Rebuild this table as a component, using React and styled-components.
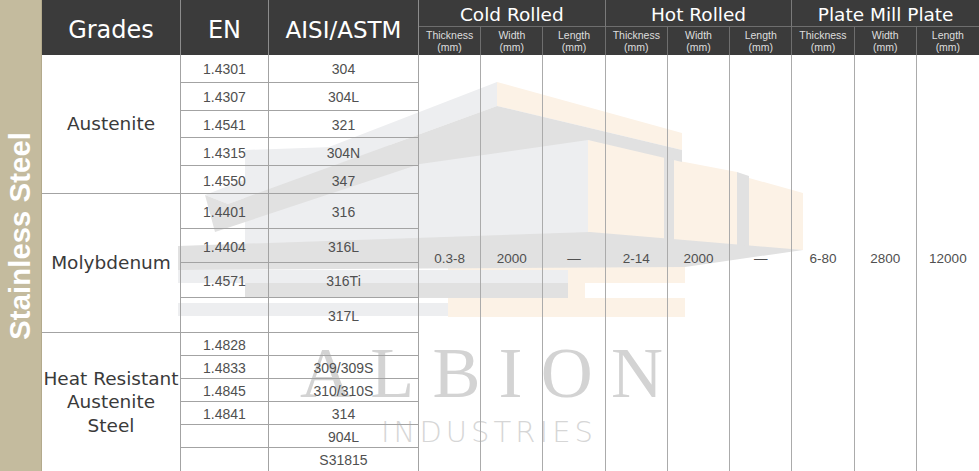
import React from "react";
import styled, { createGlobalStyle } from "styled-components";

const Global = createGlobalStyle`
  html, body { margin: 0; padding: 0; background: #ffffff; }
  body { width: 979px; height: 471px; overflow: hidden; }
`;

const Table = styled.div`
  position: relative;
  display: grid;
  width: 979px;
  height: 471px;
  grid-template-columns: 42px 139px 88px 150px repeat(9, 1fr);
  grid-template-rows: 27px 28px repeat(5, 27.8px) repeat(4, 34.75px) repeat(6, 23px);
  font-family: "DejaVu Sans", "Liberation Sans", sans-serif;
`;

const Sidebar = styled.div`
  grid-column: 1;
  grid-row: 1 / -1;
  background: #c4bb9e;
  border-right: 1px solid #b3aa8c;
  display: flex;
  align-items: center;
  justify-content: center;
  z-index: 1;
`;

const SideLabel = styled.span`
  writing-mode: vertical-rl;
  transform: rotate(180deg);
  font-family: "Liberation Sans", Arial, sans-serif;
  font-weight: 700;
  font-size: 29px;
  color: #ffffff;
  letter-spacing: 0.2px;
  white-space: nowrap;
`;

const MainHead = styled.div`
  grid-column: ${(p) => p.$col};
  grid-row: 1 / 3;
  background: #3b3b3b;
  color: #ffffff;
  font-size: ${(p) => p.$size || 24}px;
  display: flex;
  align-items: center;
  justify-content: center;
  padding-top: 4px;
  box-sizing: border-box;
  border-right: 1px solid #8c8c8c;
  z-index: 1;
`;

const GroupHead = styled.div`
  grid-column: ${(p) => p.$col};
  grid-row: 1;
  background: #3b3b3b;
  color: #ffffff;
  font-size: 18.5px;
  display: flex;
  align-items: center;
  justify-content: center;
  padding-top: 2px;
  box-sizing: border-box;
  border-right: ${(p) => (p.$last ? "none" : "1px solid #7a7a7a")};
  border-bottom: 1px solid #6e6e6e;
  z-index: 1;
`;

const SubHead = styled.div`
  grid-column: ${(p) => p.$col};
  grid-row: 2;
  background: #3b3b3b;
  color: #dedede;
  font-family: "Liberation Sans", Arial, sans-serif;
  font-size: 10.5px;
  line-height: 12px;
  display: flex;
  flex-direction: column;
  align-items: center;
  justify-content: center;
  border-right: ${(p) => (p.$last ? "none" : "1px solid #6e6e6e")};
  z-index: 1;
`;

const GradeCell = styled.div`
  grid-column: 2;
  grid-row: ${(p) => p.$rows};
  display: flex;
  flex-direction: column;
  align-items: center;
  justify-content: center;
  text-align: center;
  font-size: 18.5px;
  line-height: 23.5px;
  color: #3a3a3a;
  border-right: 1px solid #a3a3a3;
  border-bottom: ${(p) => (p.$last ? "none" : "1px solid #a3a3a3")};
  position: relative;
  z-index: 1;
  white-space: nowrap;
`;

const CodeCell = styled.div`
  grid-column: ${(p) => p.$col};
  grid-row: ${(p) => p.$row};
  display: flex;
  align-items: center;
  justify-content: center;
  font-family: "Liberation Sans", Arial, sans-serif;
  font-size: 14px;
  color: #505050;
  padding-top: 2px;
  box-sizing: border-box;
  border-right: 1px solid #a3a3a3;
  border-bottom: ${(p) => (p.$last ? "none" : "1px solid #a3a3a3")};
  position: relative;
  z-index: 1;
`;

const ValueCell = styled.div`
  grid-column: ${(p) => p.$col};
  grid-row: 3 / -1;
  display: flex;
  align-items: center;
  justify-content: center;
  padding-bottom: 8px;
  box-sizing: border-box;
  font-family: "Liberation Sans", Arial, sans-serif;
  font-size: 13.5px;
  color: #505050;
  border-right: ${(p) => (p.$last ? "none" : "1px solid #ababab")};
  position: relative;
  z-index: 1;
`;

const Watermark = styled.svg`
  position: absolute;
  left: 0;
  top: 0;
  width: 979px;
  height: 471px;
  z-index: 0;
  pointer-events: none;
`;

const LIGHT = "#edeef0";
const DARK = "#e1e1e1";
const CREAM = "#fcf2e6";

function Building() {
  return (
    <Watermark viewBox="0 0 979 471" aria-hidden="true">
      {/* walls */}
      <polygon points="245,150 588,138 588,263 245,263" fill={LIGHT} />
      <polygon points="588,140 664,150 664,240 588,238" fill={CREAM} />
      <polygon points="674,160 737,172 737,245 674,243" fill={CREAM} />
      <polygon points="749,178 803,193 803,250 749,248" fill={CREAM} />
      <polygon points="664,150 674,152 674,243 664,243" fill={DARK} />
      <polygon points="737,172 749,176 749,248 737,248" fill={DARK} />
      {/* roof */}
      <polygon points="205,195 497,82 497,106 228,204" fill={LIGHT} />
      <polygon points="497,82 682,133 682,150 497,106" fill={CREAM} />
      <polygon points="228,204 497,106 682,150 682,162 588,140 420,164 215,232 205,195" fill={DARK} />
      {/* lower beam */}
      <polygon points="448,263 685,263 685,317 448,317" fill={CREAM} />
      <polygon points="178,246 590,232 803,250 685,267 178,270" fill={DARK} />
      <polygon points="178,270 568,270 568,283 178,283" fill={LIGHT} />
      <polygon points="245,283 568,283 568,298 245,298" fill={DARK} />
      <polygon points="585,283 685,283 685,298 585,298" fill="#ffffff" />
      <polygon points="178,303 448,303 448,316 178,316" fill={LIGHT} />
      <text
        x="300"
        y="397"
        fontFamily="'Liberation Serif', 'Times New Roman', serif"
        fontSize="72"
        fill="#d3d3d3"
        textLength="363"
        lengthAdjust="spacing"
      >
        ALBION
      </text>
      <text
        x="381"
        y="442"
        fontFamily="'DejaVu Sans', sans-serif"
        fontWeight="200"
        fontSize="29"
        fill="#d6d6d6"
        textLength="212"
        lengthAdjust="spacing"
      >
        INDUSTRIES
      </text>
    </Watermark>
  );
}

const groups = [
  { name: "Cold Rolled", values: ["0.3-8", "2000", "—"] },
  { name: "Hot Rolled", values: ["2-14", "2000", "—"] },
  { name: "Plate Mill Plate", values: ["6-80", "2800", "12000"] },
];

const subs = ["Thickness", "Width", "Length"];

const grades = [
  {
    lines: ["Austenite"],
    rows: [
      ["1.4301", "304"],
      ["1.4307", "304L"],
      ["1.4541", "321"],
      ["1.4315", "304N"],
      ["1.4550", "347"],
    ],
  },
  {
    lines: ["Molybdenum"],
    rows: [
      ["1.4401", "316"],
      ["1.4404", "316L"],
      ["1.4571", "316Ti"],
      ["", "317L"],
    ],
  },
  {
    lines: ["Heat Resistant", "Austenite", "Steel"],
    rows: [
      ["1.4828", ""],
      ["1.4833", "309/309S"],
      ["1.4845", "310/310S"],
      ["1.4841", "314"],
      ["", "904L"],
      ["", "S31815"],
    ],
  },
];

export default function App() {
  let rowCursor = 3;
  const body = [];
  grades.forEach((g, gi) => {
    const start = rowCursor;
    const end = start + g.rows.length;
    const lastGroup = gi === grades.length - 1;
    body.push(
      <GradeCell key={`g${gi}`} $rows={`${start} / ${end}`} $last={lastGroup}>
        {g.lines.map((l) => (
          <span key={l}>{l}</span>
        ))}
      </GradeCell>
    );
    g.rows.forEach((r, ri) => {
      const row = start + ri;
      const last = lastGroup && ri === g.rows.length - 1;
      const groupEnd = ri === g.rows.length - 1;
      body.push(
        <CodeCell key={`en${row}`} $col={3} $row={row} $last={last && groupEnd}>
          {r[0]}
        </CodeCell>,
        <CodeCell key={`ai${row}`} $col={4} $row={row} $last={last && groupEnd}>
          {r[1]}
        </CodeCell>
      );
    });
    rowCursor = end;
  });

  return (
    <>
      <Global />
      <Table>
        <Building />
        <Sidebar>
          <SideLabel>Stainless Steel</SideLabel>
        </Sidebar>
        <MainHead $col={2}>Grades</MainHead>
        <MainHead $col={3}>EN</MainHead>
        <MainHead $col={4} $size={23}>AISI/ASTM</MainHead>
        {groups.map((g, gi) => (
          <GroupHead key={g.name} $col={`${5 + gi * 3} / ${8 + gi * 3}`} $last={gi === 2}>
            {g.name}
          </GroupHead>
        ))}
        {groups.map((g, gi) =>
          subs.map((s, si) => (
            <SubHead
              key={`${g.name}-${s}`}
              $col={5 + gi * 3 + si}
              $last={gi === 2 && si === 2}
            >
              <span>{s}</span>
              <span>(mm)</span>
            </SubHead>
          ))
        )}
        {body}
        {groups.map((g, gi) =>
          g.values.map((v, vi) => (
            <ValueCell key={`${g.name}-v${vi}`} $col={5 + gi * 3 + vi} $last={gi === 2 && vi === 2}>
              {v}
            </ValueCell>
          ))
        )}
      </Table>
    </>
  );
}
